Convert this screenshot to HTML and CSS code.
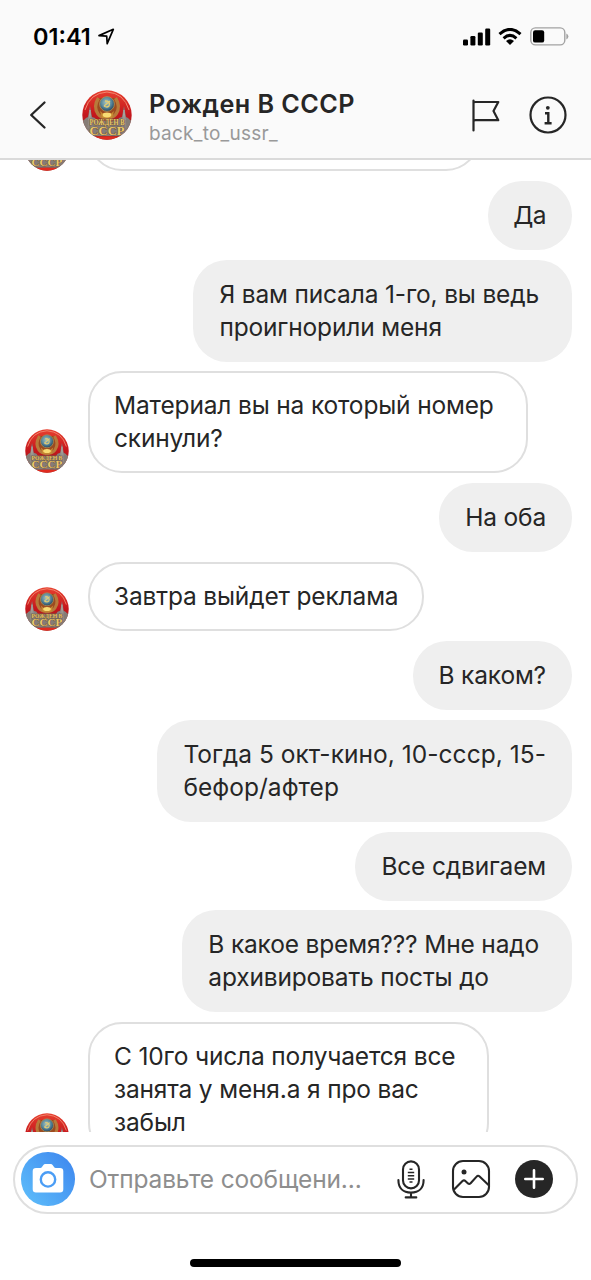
FILE: index.html
```
<!DOCTYPE html>
<html lang="ru">
<head>
  <meta charset="UTF-8">
  <title>Рожден В СССР</title>
  <link rel="stylesheet" href="styles.css">
</head>
<body>
  <!-- shared avatar artwork -->
  <svg class="defs" width="0" height="0">
    <defs>
      <linearGradient id="sky" x1="0" y1="0" x2="0" y2="1">
        <stop offset="0" stop-color="#e8402f"/>
        <stop offset="0.5" stop-color="#c4161c"/>
        <stop offset="1" stop-color="#8f2a22"/>
      </linearGradient>
      <radialGradient id="globe" cx="0.45" cy="0.4" r="0.6">
        <stop offset="0" stop-color="#a8c4bd"/>
        <stop offset="0.6" stop-color="#55869c"/>
        <stop offset="1" stop-color="#27455f"/>
      </radialGradient>
      <clipPath id="round"><circle cx="25" cy="25" r="24.7"/></clipPath>
    </defs>
    <symbol id="emblem" viewBox="0 0 50 50">
      <g clip-path="url(#round)">
        <rect width="50" height="50" fill="url(#sky)"/>
        <path d="M3 20Q8 3 25 2Q42 3 47 20" fill="none" stroke="#f08a72" stroke-width="1"/>
        <path d="M0 32L4 28L6 27L8 16L10 27L13 28L15 31H35L37 28L40 27L42 16L44 27L46 28L50 32V46H0Z" fill="#85807d"/>
        <path d="M6 38L8 20L10 38M40 38L42 20L44 38" fill="none" stroke="#aaa39d" stroke-width="1"/>
        <path d="M16.5 8Q11 17 16 24Q19 28 25 28Q31 28 34 24Q39 17 33.5 8" fill="#9c4a20" stroke="#b87a3a" stroke-width="3.4"/>
        <path d="M18 21L25 27L32 21L30 28H20Z" fill="#c88a31"/>
        <circle cx="25" cy="14" r="7.4" fill="url(#globe)" stroke="#b89550" stroke-width="0.8"/>
        <path d="M22 16L28 11M23 11Q29 11 27 16Q25 18 22 16" fill="none" stroke="#e0cc76" stroke-width="1.3"/>
        <ellipse cx="25" cy="25" rx="4.3" ry="2.4" fill="#f9dc73"/>
        <path d="M0 30H50V46H0Z" fill="#857a72" opacity="0.6"/>
        <path d="M6 47.2Q25 45.4 44 47.2V50H6Z" fill="#e02b20"/>
        <text class="emblem-small" x="25" y="35.4" textLength="35" lengthAdjust="spacingAndGlyphs">РОЖДЕН В</text>
        <text class="emblem-big" x="25" y="44.8" textLength="35" lengthAdjust="spacingAndGlyphs">СССР</text>
      </g>
    </symbol>
  </svg>

  <div class="screen">
    <header class="header">
      <div class="status-bar">
        <span class="time">01:41</span>
        <svg class="location" width="17" height="17" viewBox="0 0 17 17"><path d="M1 7.6L15.3 1.3L9.2 15.6L8.7 8.2Z" fill="none" stroke="#000" stroke-width="1.7" stroke-linejoin="round"/></svg>
        <svg class="signal" width="28" height="18" viewBox="0 0 28 18">
          <rect x="0" y="11.5" width="5" height="6" rx="1.2"/>
          <rect x="7.4" y="8" width="5" height="9.5" rx="1.2"/>
          <rect x="14.8" y="4.5" width="5" height="13" rx="1.2"/>
          <rect x="22.2" y="0.5" width="5" height="17" rx="1.2"/>
        </svg>
        <svg class="wifi" width="24" height="18" viewBox="0 0 24 18">
          <path d="M1.5 6.1Q12 -3.3 22.5 6.1M5.6 10.3Q12 4.5 18.4 10.3" fill="none" stroke="#000" stroke-width="3"/>
          <path d="M8 12.9Q12 9.7 16 12.9L12 17Z"/>
        </svg>
        <svg class="battery" width="39" height="19" viewBox="0 0 39 19">
          <rect x="0.8" y="0.9" width="34" height="17" rx="4.6" fill="none" stroke="#a2a2a2" stroke-width="1.4"/>
          <rect x="3" y="3.2" width="11.2" height="12.4" rx="2.2"/>
          <path d="M36.3 6.5Q38.4 7.4 38.4 9.4Q38.4 11.5 36.3 12.4Z" fill="#a2a2a2"/>
        </svg>
      </div>
      <div class="nav">
        <svg class="back" width="18" height="30" viewBox="0 0 18 30"><path d="M15.5 2.5L2.2 15L15.5 27.5" fill="none" stroke="#262626" stroke-width="2.3" stroke-linecap="round" stroke-linejoin="round"/></svg>
        <svg class="avatar-large"><use href="#emblem"/></svg>
        <div class="profile">
          <h1>Рожден В СССР</h1>
          <p>back_to_ussr_</p>
        </div>
        <svg class="flag" width="30" height="34" viewBox="0 0 30 34"><path d="M1.5 2.5V32.5M1.5 5.2Q1.5 4 3.5 4H26.3L21.5 13L26.3 22.2H3.5Q1.5 22.2 1.5 23.6" fill="none" stroke="#262626" stroke-width="2.2" stroke-linecap="round" stroke-linejoin="round"/></svg>
        <svg class="info" width="38" height="38" viewBox="0 0 38 38">
          <circle cx="19" cy="19" r="17.5" fill="none" stroke="#262626" stroke-width="2.2"/>
          <circle cx="18.8" cy="11.8" r="1.9" fill="#262626"/>
          <path d="M16 17.2H19.3V27M15.6 27.3H22.6" fill="none" stroke="#262626" stroke-width="2.4"/>
        </svg>
      </div>
    </header>

    <main class="chat">
      <div class="row in scrolled">
        <svg class="avatar"><use href="#emblem"/></svg>
        <div class="bubble"></div>
      </div>
      <div class="row out"><div class="bubble short">Да</div></div>
      <div class="row out"><div class="bubble multi">Я вам писала 1-го, вы ведь<br>проигнорили меня</div></div>
      <div class="row in">
        <svg class="avatar"><use href="#emblem"/></svg>
        <div class="bubble multi">Материал вы на который номер<br>скинули?</div>
      </div>
      <div class="row out"><div class="bubble">На оба</div></div>
      <div class="row in">
        <svg class="avatar"><use href="#emblem"/></svg>
        <div class="bubble">Завтра выйдет реклама</div>
      </div>
      <div class="row out"><div class="bubble">В каком?</div></div>
      <div class="row out"><div class="bubble numbers">Тогда 5 окт-кино, 10-ссср, 15-<br>бефор/афтер</div></div>
      <div class="row out"><div class="bubble">Все сдвигаем</div></div>
      <div class="row out"><div class="bubble multi">В какое время??? Мне надо<br>архивировать посты до</div></div>
      <div class="row in">
        <svg class="avatar"><use href="#emblem"/></svg>
        <div class="bubble multi">С 10го числа получается все<br>занята у меня.а я про вас<br>забыл</div>
      </div>
    </main>

    <footer class="footer">
      <div class="composer">
        <div class="camera">
          <svg width="32" height="30" viewBox="0 0 32 30">
            <path d="M4 5H8.2Q9.4 5 10 4L11.2 2.2Q12 1 13.4 1H18.6Q20 1 20.8 2.2L22 4Q22.6 5 23.8 5H28Q31.3 5 31.3 8.3V26.2Q31.3 29.5 28 29.5H4Q0.7 29.5 0.7 26.2V8.3Q0.7 5 4 5Z" fill="#fff"/>
            <circle cx="16" cy="16.4" r="7.2" fill="none" stroke="#4b9df5" stroke-width="2.4"/>
          </svg>
        </div>
        <span class="placeholder">Отправьте сообщени...</span>
        <svg class="mic" width="28" height="39" viewBox="0 0 28 39">
          <g fill="none" stroke="#262626" stroke-width="2.1" stroke-linecap="round">
            <rect x="6" y="1.4" width="16" height="27" rx="8"/>
            <path d="M1.4 20C1.4 28 6 32.6 14 32.6S26.6 28 26.6 20M14 33V36.8M8.7 37.4H19.3"/>
          </g>
          <path d="M12.5 9.3H15.5M10.8 12.5H17.2M10.8 15.7H17.2M10.8 18.9H17.2M12.5 22.1H15.5" fill="none" stroke="#262626" stroke-width="1.5"/>
        </svg>
        <svg class="picture" width="40" height="40" viewBox="0 0 40 40">
          <g fill="none" stroke="#262626" stroke-width="2.1" stroke-linejoin="round">
            <rect x="2" y="2" width="36" height="36" rx="10"/>
            <path d="M2.8 30.8L11.5 22Q13 20.6 14.4 22L17 24.4Q18.3 25.5 19.6 24.2L25.6 17.6Q27 16 28.6 17.5L37.5 26"/>
          </g>
          <circle cx="13" cy="13" r="2.5" fill="#262626"/>
        </svg>
        <svg class="plus" width="38" height="38" viewBox="0 0 38 38">
          <circle cx="19" cy="19" r="19" fill="#262626"/>
          <path d="M19 10.3V27.7M10.3 19H27.7" stroke="#fff" stroke-width="2.6" stroke-linecap="round"/>
        </svg>
      </div>
      <div class="home-indicator"></div>
    </footer>
  </div>
</body>
</html>
```
FILE: styles.css
```
* {
  box-sizing: border-box;
}
body {
  margin: 0;
  background: #fff;
  color: #262626;
  font-family: Inter, "Liberation Sans", sans-serif;
}
svg {
  display: block;
  flex-shrink: 0;
}
.defs {
  position: absolute;
}
.screen {
  width: 591px;
  height: 1280px;
  display: flex;
  flex-direction: column;
  overflow: hidden;
}

/* header */
.header {
  height: 160px;
  background: #fafafa;
  border-bottom: 2px solid #dadada;
}
.status-bar {
  height: 72px;
  display: flex;
  align-items: center;
  padding: 1px 22px 0 33px;
  color: #000;
}
.time {
  font-size: 23.5px;
  font-weight: 600;
  width: 65px;
  white-space: nowrap;
}
.signal {
  margin-left: auto;
}
.wifi {
  margin-left: 7px;
}
.battery {
  margin-left: 8px;
}
.nav {
  height: 86px;
  display: flex;
  align-items: center;
  padding: 0 24px 0 29px;
}
.avatar-large {
  width: 50px;
  height: 50px;
  margin-left: 35px;
}
.profile {
  margin-left: 17px;
  padding-top: 6px;
  flex: 1;
}
.profile h1 {
  margin: 0;
  font-size: 25.2px;
  line-height: 30px;
  font-weight: 600;
  letter-spacing: 0.45px;
  white-space: nowrap;
}
.profile p {
  margin: 0;
  font-size: 19px;
  line-height: 29px;
  letter-spacing: 0.25px;
  color: #999;
}
.info {
  margin-left: 27px;
}

/* messages */
.chat {
  height: 972px;
  overflow: hidden;
}
.row {
  display: flex;
  align-items: flex-end;
  margin-bottom: 9.83px;
  padding: 0 19px 0 25px;
}
.row.out {
  justify-content: flex-end;
}
.scrolled {
  margin-top: -91px;
}
.scrolled .bubble {
  width: 392px;
  height: 102px;
}
.bubble {
  padding: 18px 26px;
  border-radius: 34px;
  font-size: 24.5px;
  line-height: 33px;
  letter-spacing: -0.16px;
  white-space: nowrap;
}
.out .bubble {
  background: #efefef;
}
.in .bubble {
  padding: 16px 24px;
  border: 2px solid #dfdfdf;
}
.out .multi {
  padding-right: 33px;
}
.in .multi {
  padding-right: 32px;
}
.bubble.short {
  padding-left: 25px;
  letter-spacing: -0.6px;
}
.bubble.numbers {
  letter-spacing: 0.04px;
}
.avatar {
  width: 44px;
  height: 44px;
  margin-right: 19px;
}
.emblem-small,
.emblem-big {
  font-family: "Liberation Serif", serif;
  font-weight: bold;
  text-anchor: middle;
  fill: #ecca69;
  stroke: #5c4430;
  stroke-width: 0.7px;
  paint-order: stroke;
}
.emblem-small {
  font-size: 7.6px;
}
.emblem-big {
  font-size: 12.4px;
}

/* composer */
.footer {
  flex: 1;
  padding: 12.5px 13px 0;
}
.composer {
  height: 69px;
  display: flex;
  align-items: center;
  padding: 0 23.5px 0 6px;
  border: 2px solid #dfdfdf;
  border-radius: 35px;
}
.camera {
  width: 53.5px;
  height: 53.5px;
  display: flex;
  align-items: center;
  justify-content: center;
  border-radius: 50%;
  background: linear-gradient(50deg, #5fc0fb, #3c84ee);
}
.camera svg {
  margin-top: -3px;
}
.placeholder {
  flex: 1;
  margin-left: 14.5px;
  font-size: 24.5px;
  letter-spacing: -0.15px;
  color: #8e8e8e;
  white-space: nowrap;
}
.picture {
  margin-left: 26px;
}
.plus {
  margin-left: 24px;
}
.home-indicator {
  width: 211px;
  height: 8px;
  margin: 45px auto 0;
  border-radius: 4px;
  background: #000;
}
```
